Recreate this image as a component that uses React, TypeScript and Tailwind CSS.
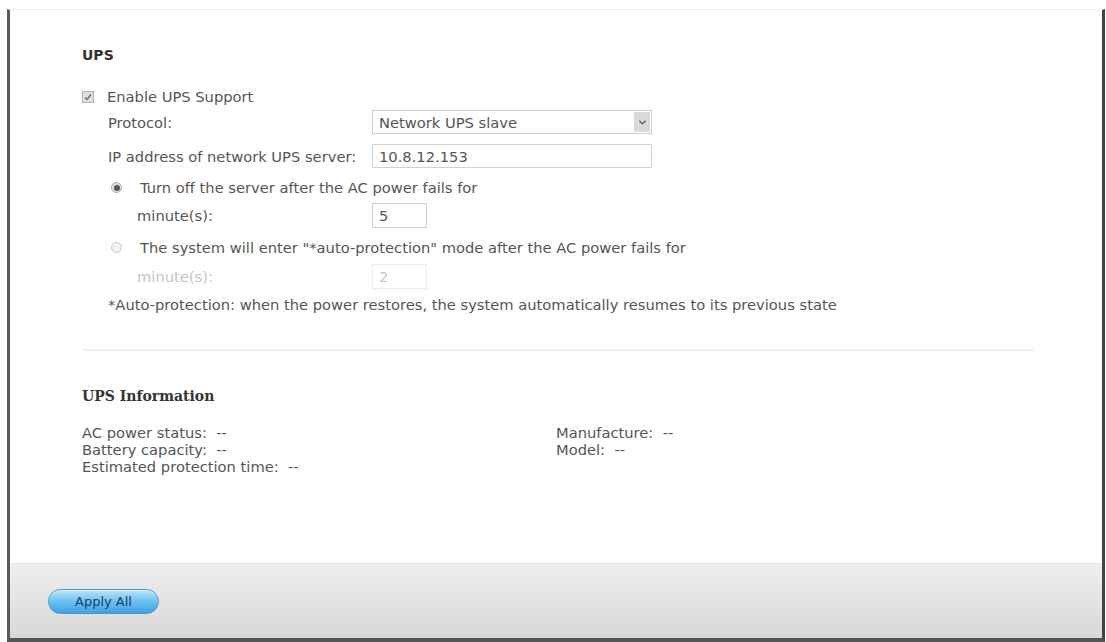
import { ChevronDown } from "lucide-react";

const sans = "font-['DejaVu_Sans',sans-serif]";

function CheckBox() {
  return (
    <span className="flex h-[12px] w-[12px] items-center justify-center border border-[#b4b4b4] bg-[#dedede]">
      <svg viewBox="0 0 10 10" className="h-[10px] w-[10px]">
        <path d="M2 5.5 L4 7.5 L8 2.5" fill="none" stroke="#6f6f6f" strokeWidth="1.4" />
      </svg>
    </span>
  );
}

function Radio({ checked }: { checked?: boolean }) {
  return (
    <span
      className={
        checked
          ? "flex h-[11px] w-[11px] items-center justify-center rounded-full border border-[#aaa] bg-[#ddd]"
          : "flex h-[11px] w-[11px] items-center justify-center rounded-full border border-[#c8c8c8] bg-[#f2f2f2]"
      }
    >
      {checked && <span className="h-[6px] w-[6px] rounded-full bg-[#555]" />}
    </span>
  );
}

function FormRow({
  label,
  children,
  className,
  disabled,
}: {
  label: string;
  children: React.ReactNode;
  className?: string;
  disabled?: boolean;
}) {
  return (
    <div className={`flex items-center ${className ?? ""}`}>
      <span className={`w-[264px] ${disabled ? "text-[#c4c4c4]" : "text-[#555]"}`}>{label}</span>
      {children}
    </div>
  );
}

export default function App() {
  return (
    <div className={`h-[642px] w-[1106px] bg-white pl-[7px] pr-[1px] pt-[9px] ${sans}`}>
      <div className="flex h-full flex-col border-b-[4px] border-l-[3px] border-r-[3px] border-t border-b-[#555] border-l-[#5a5a5a] border-r-[#444] border-t-[#efefef]">
        <div className="flex-1 pl-[72px] pr-[68px] pt-[37px] text-[14.7px] leading-[17px] text-[#555]">
          <h2 className="text-[14px] font-bold leading-[16px] text-[#333]">UPS</h2>

          <div className="mt-[25px] flex items-center gap-[13px]">
            <CheckBox />
            <span>Enable UPS Support</span>
          </div>

          <div className="pl-[26px]">
            <FormRow label="Protocol:" className="mt-[5px]">
              <div className="flex h-[24px] w-[280px] items-center border border-[#d0d0d0] bg-white pl-[6px] text-[#555]">
                <span className="flex-1">Network UPS slave</span>
                <span className="mr-[1px] flex h-[20px] w-[16px] items-center justify-center bg-[#d9d9d9]">
                  <ChevronDown className="h-[11px] w-[11px] text-[#555]" strokeWidth={3} />
                </span>
              </div>
            </FormRow>

            <FormRow label="IP address of network UPS server:" className="mt-[10px]">
              <div className="flex h-[24px] w-[280px] items-center border border-[#d0d0d0] bg-white pl-[6px] text-[#555]">
                10.8.12.153
              </div>
            </FormRow>

            <div className="mt-[11px] flex items-center gap-[18px] pl-[3px]">
              <Radio checked />
              <span>Turn off the server after the AC power fails for</span>
            </div>
            <FormRow label="minute(s):" className="mt-[7px] pl-[29px]">
              <div className="-ml-[29px] flex h-[25px] w-[55px] items-center border border-[#d0d0d0] bg-white pl-[6px] text-[#555]">
                5
              </div>
            </FormRow>

            <div className="mt-[11px] flex items-center gap-[18px] pl-[3px]">
              <Radio />
              <span>The system will enter "*auto-protection" mode after the AC power fails for</span>
            </div>
            <FormRow label="minute(s):" className="mt-[8px] pl-[29px]" disabled>
              <div className="-ml-[29px] flex h-[25px] w-[55px] items-center border border-[#ececec] bg-white pl-[6px] text-[#c8c8c8]">
                2
              </div>
            </FormRow>
          </div>

          <p className="mt-[7px] pl-[26px]">
            *Auto-protection: when the power restores, the system automatically resumes to its previous state
          </p>

          <div className="mt-[36px] h-[2px] bg-[#f0f0f0]" />

          <h2 className="mt-[37px] font-['DejaVu_Serif',serif] text-[14px] font-bold leading-[16px] text-[#333]">
            UPS Information
          </h2>

          <div className="mt-[20px] grid grid-cols-[474px_1fr] leading-[17px] text-[#555]">
            <div className="flex flex-col">
              <span>AC power status:&nbsp;&nbsp;--</span>
              <span>Battery capacity:&nbsp;&nbsp;--</span>
              <span>Estimated protection time:&nbsp;&nbsp;--</span>
            </div>
            <div className="flex flex-col">
              <span>Manufacture:&nbsp;&nbsp;--</span>
              <span>Model:&nbsp;&nbsp;--</span>
            </div>
          </div>
        </div>

        <div className="flex h-[75px] items-center border-t border-[#e6e6e6] bg-gradient-to-b from-[#efefef] to-[#d8d8d8] pl-[38px]">
          <button className="h-[25px] w-[111px] rounded-full border border-[#4d96cc] bg-gradient-to-b from-[#b8e4fa] via-[#6cc0ef] to-[#3aa3e3] text-[13px] leading-[23px] text-[#1d3d6b] shadow-[inset_0_1px_0_rgba(255,255,255,0.7)]">
            Apply All
          </button>
        </div>
      </div>
    </div>
  );
}
